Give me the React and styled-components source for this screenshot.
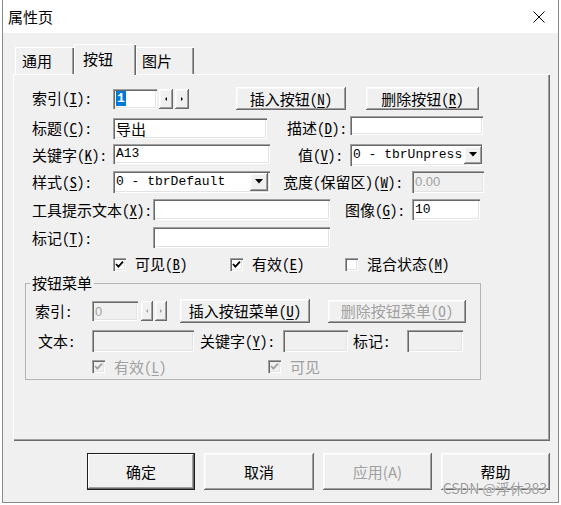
import React from 'react'
import styled, { createGlobalStyle, css } from 'styled-components'

const GlobalStyle = createGlobalStyle`
  html, body { margin: 0; padding: 0; background: #fff; }
  body { font-family: "Noto Sans Mono CJK SC", "Noto Sans CJK SC", "Liberation Sans", sans-serif; }
  u { text-decoration-thickness: 1px; text-underline-offset: 2px; }
`

const sunken = css`
  box-shadow: inset 1px 1px #a0a0a0, inset 2px 2px #696969, inset -1px -1px #fff, inset -2px -2px #e3e3e3;
`

const raised = css`
  box-shadow: inset -1px -1px #696969, inset 1px 1px #fff, inset -2px -2px #a0a0a0, inset 2px 2px #f8f8f8;
`

const Window = styled.div`
  position: relative;
  width: 557px;
  height: 503px;
  margin-left: 2px;
  box-sizing: border-box;
  border: 1px solid #8a8a8a;
  border-top: none;
  background: #f0f0f0;
  display: flex;
  flex-direction: column;
`

const TitleBar = styled.div`
  height: 33px;
  flex-shrink: 0;
  background: #fff;
  display: flex;
  align-items: center;
  justify-content: space-between;
  padding: 0 13px 0 5px;
`

const Title = styled.span`
  font-family: "Noto Sans CJK SC", sans-serif;
  font-size: 15px;
  color: #000;
`

const Body = styled.div`
  padding: 11px 8px 0 10px;
  display: flex;
  flex-direction: column;
`

const TabStrip = styled.div`
  display: flex;
  align-items: flex-end;
  height: 30px;
  padding-left: 2px;
`

const Tab = styled.div`
  position: relative;
  z-index: ${p => (p.$active ? 2 : 1)};
  width: ${p => p.$w}px;
  height: ${p => (p.$active ? 31 : 27)}px;
  margin-bottom: ${p => (p.$active ? -1 : 0)}px;
  box-sizing: border-box;
  padding-left: ${p => p.$pl}px;
  padding-bottom: ${p => (p.$active ? 2 : 0)}px;
  display: flex;
  align-items: center;
  background: #f0f0f0;
  font-family: "Noto Sans CJK SC", sans-serif;
  font-size: 15px;
  box-shadow: inset 1px 1px #fff, inset -1px 0 #696969, inset -2px 0 #a0a0a0;
`

const Panel = styled.div`
  height: 367px;
  box-sizing: border-box;
  padding: 13px 0 0 19px;
  display: flex;
  flex-direction: column;
  box-shadow: inset 1px 1px #fff, inset -1px -1px #696969, inset -2px -2px #a0a0a0;
`

const Row = styled.div`
  display: flex;
  align-items: center;
  height: ${p => p.$h}px;
  margin-top: ${p => p.$mt || 0}px;
  flex-shrink: 0;
`

const Label = styled.span`
  flex-shrink: 0;
  width: ${p => p.$w}px;
  margin-left: ${p => p.$ml || 0}px;
  margin-top: ${p => p.$dy || 0}px;
  white-space: nowrap;
  font-size: 15px;
  line-height: 18px;
  color: ${p => (p.$disabled ? '#a0a0a0' : '#000')};
`

const Field = styled.div`
  flex-shrink: 0;
  width: ${p => p.$w}px;
  height: ${p => p.$h}px;
  margin-left: ${p => p.$ml || 0}px;
  margin-top: ${p => p.$dy || 0}px;
  box-sizing: border-box;
  padding: 0 2px 0 3px;
  display: flex;
  align-items: center;
  justify-content: space-between;
  background: ${p => (p.$disabled ? '#f0f0f0' : '#fff')};
  ${sunken};
  font-family: "Liberation Mono", "Noto Sans CJK SC", monospace;
  font-size: 13px;
  color: ${p => (p.$disabled ? '#a0a0a0' : '#000')};
  white-space: nowrap;
  overflow: hidden;
`

const CjkText = styled.span`
  font-family: "Noto Sans CJK SC", sans-serif;
  font-size: 15px;
`

const GrayText = styled.span`
  font-family: "Liberation Sans", sans-serif;
  font-size: 13px;
  color: #a0a0a0;
`

const Selected = styled.span`
  background: #0078d7;
  color: #fff;
  padding: 0 1px;
  line-height: 15px;
  font-weight: bold;
`

const DropButton = styled.div`
  flex-shrink: 0;
  width: 18px;
  height: 18px;
  margin-left: 2px;
  box-sizing: border-box;
  background: #f0f0f0;
  ${raised};
  display: flex;
  align-items: center;
  justify-content: center;
`

const SpinButton = styled.div`
  flex-shrink: 0;
  width: ${p => p.$w}px;
  height: 20px;
  margin-left: ${p => p.$ml || 0}px;
  box-sizing: border-box;
  background: #f0f0f0;
  ${raised};
  display: flex;
  align-items: center;
  justify-content: center;
`

const Arrow = styled.span`
  width: 0;
  height: 0;
  border-top: 2px solid transparent;
  border-bottom: 2px solid transparent;
  ${p => (p.$dir === 'left'
    ? css`border-right: 2px solid ${p.$disabled ? '#a0a0a0' : '#000'};`
    : css`border-left: 2px solid ${p.$disabled ? '#a0a0a0' : '#000'};`)}
`

const Button = styled.div`
  flex-shrink: 0;
  width: ${p => p.$w}px;
  height: ${p => p.$h}px;
  margin-left: ${p => p.$ml || 0}px;
  box-sizing: border-box;
  background: #f0f0f0;
  ${raised};
  display: flex;
  align-items: center;
  justify-content: center;
  padding-bottom: 1px;
  font-size: 15px;
  white-space: nowrap;
  color: ${p => (p.$disabled ? '#a0a0a0' : '#000')};
`

const CheckItem = styled.div`
  flex-shrink: 0;
  display: flex;
  align-items: center;
  width: ${p => p.$w}px;
  margin-left: ${p => p.$ml || 0}px;
`

const CheckBox = styled.div`
  flex-shrink: 0;
  width: 13px;
  height: 13px;
  box-sizing: border-box;
  margin-right: 9px;
  background: ${p => (p.$disabled ? '#f0f0f0' : '#fff')};
  ${sunken};
  display: flex;
  align-items: center;
  justify-content: center;
`

const Group = styled.fieldset`
  margin: 1px 0 0 -7px;
  width: 456px;
  box-sizing: border-box;
  padding: 6px 0 6px 9px;
  border: 1px solid #b4b4b4;
  min-width: 0;
  display: flex;
  flex-direction: column;
`

const Legend = styled.legend`
  margin-left: -5px;
  padding: 0 2px;
  font-family: "Noto Sans CJK SC", sans-serif;
  font-size: 15px;
  line-height: 20px;
`

const Footer = styled.div`
  display: flex;
  gap: 9px;
  margin-top: 12px;
  padding-left: 74px;
`

const DialogButton = styled.div`
  width: ${p => p.$w}px;
  height: 37px;
  box-sizing: border-box;
  background: #f0f0f0;
  display: flex;
  align-items: center;
  justify-content: center;
  font-family: "Noto Sans CJK SC", sans-serif;
  font-size: 15px;
  line-height: 16px;
  color: ${p => (p.$disabled ? '#a0a0a0' : '#000')};
  box-shadow: ${p => (p.$default
    ? 'inset 0 0 0 1px #1e1e1e, inset -2px -2px #696969, inset 2px 2px #fff, inset -3px -3px #a0a0a0'
    : 'inset -1px -1px #696969, inset 1px 1px #fff, inset -2px -2px #a0a0a0, inset 2px 2px #f8f8f8')};
`

const Watermark = styled.div`
  position: absolute;
  right: 11px;
  bottom: 7px;
  font-family: "Noto Sans CJK SC", "Liberation Sans", sans-serif;
  font-size: 14px;
  line-height: 14px;
  color: #9a9a9a;
  text-shadow: 0 0 1px #fff, 0 0 1px #fff;
  pointer-events: none;
`

const CloseIcon = () => (
  <svg width="12" height="12" viewBox="0 0 12 12">
    <path d="M0.5 0.5 L11.5 11.5 M11.5 0.5 L0.5 11.5" stroke="#000" strokeWidth="1" fill="none" />
  </svg>
)

const Check = ({ disabled }) => (
  <svg width="9" height="9" viewBox="0 0 9 9">
    <path d="M1 4 L3.4 6.6 L8 1.6" stroke={disabled ? '#a0a0a0' : '#000'} strokeWidth="1.8" fill="none" />
  </svg>
)

const DownArrow = () => (
  <svg width="8" height="5" viewBox="0 0 8 5">
    <polygon points="0,0 8,0 4,4.5" fill="#000" />
  </svg>
)

const Spinner = ({ w, ml, disabled }) => (
  <>
    <SpinButton $w={w} $ml={ml}><Arrow $dir="left" $disabled={disabled} /></SpinButton>
    <SpinButton $w={w} $ml={2}><Arrow $dir="right" $disabled={disabled} /></SpinButton>
  </>
)

const Combo = ({ w, value, dy }) => (
  <Field $w={w} $h={22} $dy={dy}>
    <span>{value}</span>
    <DropButton><DownArrow /></DropButton>
  </Field>
)

const Option = ({ w, ml, checked, disabled, children }) => (
  <CheckItem $w={w} $ml={ml}>
    <CheckBox $disabled={disabled}>{checked && <Check disabled={disabled} />}</CheckBox>
    <Label $disabled={disabled}>{children}</Label>
  </CheckItem>
)

export default function App() {
  return (
    <>
      <GlobalStyle />
      <Window>
        <TitleBar>
          <Title>属性页</Title>
          <CloseIcon />
        </TitleBar>
        <Body>
          <TabStrip>
            <Tab $w={59} $pl={7}>通用</Tab>
            <Tab $w={62} $pl={9} $active>按钮</Tab>
            <Tab $w={58} $pl={6}>图片</Tab>
          </TabStrip>
          <Panel>
            <Row $h={23}>
              <Label $w={81} $dy={-2}>索引(<u>I</u>):</Label>
              <Field $w={44} $h={20}><Selected>1</Selected></Field>
              <Spinner w={14} ml={2} />
              <Button $w={110} $h={23} $ml={47}>插入按钮(<u>N</u>)</Button>
              <Button $w={113} $h={23} $ml={20}>删除按钮(<u>R</u>)</Button>
            </Row>
            <Row $h={23} $mt={6}>
              <Label $w={81}>标题(<u>C</u>):</Label>
              <Field $w={154} $h={21} $dy={2}><CjkText>导出</CjkText></Field>
              <Label $w={63} $ml={20}>描述(<u>D</u>):</Label>
              <Field $w={133} $h={19} $dy={-4} />
            </Row>
            <Row $h={23} $mt={4}>
              <Label $w={81}>关键字(<u>K</u>):</Label>
              <Field $w={157} $h={20} $dy={-2}>A13</Field>
              <Label $w={52} $ml={28}>值(<u>V</u>):</Label>
              <Combo w={132} value="0 - tbrUnpress" />
            </Row>
            <Row $h={23} $mt={4}>
              <Label $w={81}>样式(<u>S</u>):</Label>
              <Combo w={157} value="0 - tbrDefault" />
              <Label $w={129} $ml={13}>宽度(保留区)(<u>W</u>):</Label>
              <Field $w={72} $h={22} $disabled><GrayText>0.00</GrayText></Field>
            </Row>
            <Row $h={21} $mt={6}>
              <Label $w={121}>工具提示文本(<u>X</u>):</Label>
              <Field $w={177} $h={21} />
              <Label $w={67} $ml={15}>图像(<u>G</u>):</Label>
              <Field $w={68} $h={21}>10</Field>
            </Row>
            <Row $h={21} $mt={7}>
              <Label $w={121}>标记(<u>T</u>):</Label>
              <Field $w={177} $h={21} />
            </Row>
            <Row $h={16} $mt={8}>
              <Option w={117} ml={81} checked>可见(<u>B</u>)</Option>
              <Option w={115} checked>有效(<u>E</u>)</Option>
              <Option w={110}>混合状态(<u>M</u>)</Option>
            </Row>
            <Group>
              <Legend>按钮菜单</Legend>
              <Row $h={24}>
                <Label $w={57}>索引:</Label>
                <Field $w={46} $h={20} $disabled><GrayText>0</GrayText></Field>
                <Spinner w={12} ml={3} disabled />
                <Button $w={130} $h={24} $ml={13}>插入按钮菜单(<u>U</u>)</Button>
                <Button $w={138} $h={23} $ml={18} $disabled>删除按钮菜单(<u>O</u>)</Button>
              </Row>
              <Row $h={22} $mt={7}>
                <Label $w={54} $ml={3}>文本:</Label>
                <Field $w={102} $h={22} $disabled />
                <Label $w={83} $ml={6}>关键字(<u>Y</u>):</Label>
                <Field $w={65} $h={22} $disabled />
                <Label $w={54} $ml={5}>标记:</Label>
                <Field $w={56} $h={22} $disabled />
              </Row>
              <Row $h={13} $mt={8}>
                <Option w={176} ml={57} checked disabled>有效(<u>L</u>)</Option>
                <Option w={80} checked disabled>可见</Option>
              </Row>
            </Group>
          </Panel>
          <Footer>
            <DialogButton $w={108} $default>确定</DialogButton>
            <DialogButton $w={110}>取消</DialogButton>
            <DialogButton $w={109} $disabled>应用(A)</DialogButton>
            <DialogButton $w={109}>帮助</DialogButton>
          </Footer>
        </Body>
        <Watermark>CSDN @浮休383</Watermark>
      </Window>
    </>
  )
}
